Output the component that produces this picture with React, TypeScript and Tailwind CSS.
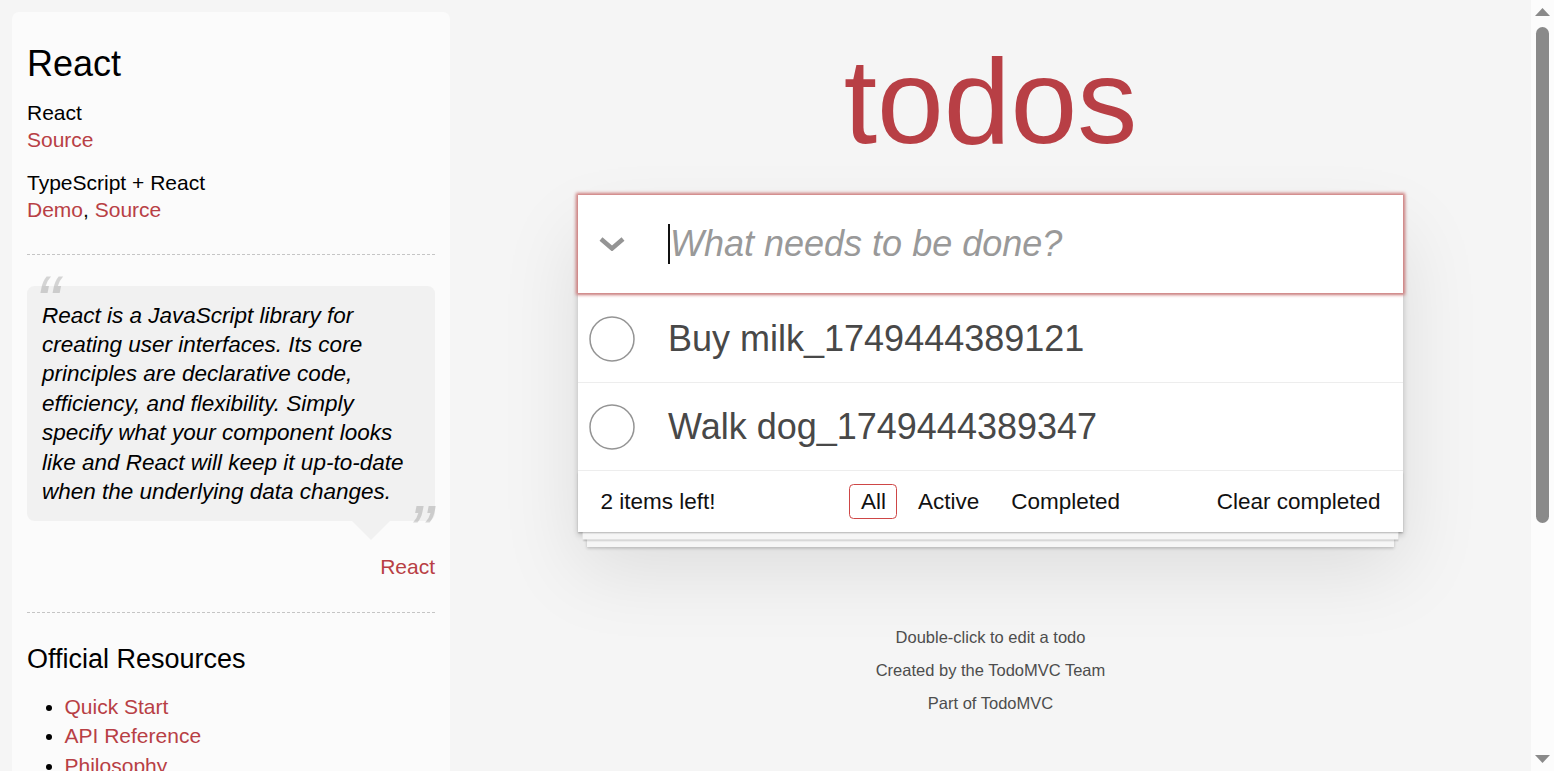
import { Fragment } from 'react';

const todos = ['Buy milk_1749444389121', 'Walk dog_1749444389347'];
const filters = ['All', 'Active', 'Completed'];
const resources = ['Quick Start', 'API Reference', 'Philosophy', 'React Community'];

const link = 'text-[#b83f45]';

export default function App() {
  return (
    <div className="flex h-[771px] overflow-hidden bg-[#f5f5f5] font-['Liberation_Sans',Arial,sans-serif] text-black">
      <Sidebar />

      <main className="flex flex-1 flex-col items-center pt-[41px]">
        <h1 className="text-center text-[120px] leading-[120px] font-normal text-[#b83f45]">todos</h1>

        <section className="mt-[34px] w-[825px] bg-white shadow-[0_3px_6px_0_rgba(0,0,0,0.2),0_37.5px_75px_0_rgba(0,0,0,0.1)]">
          <div className="relative z-10 flex h-[98px] items-center pl-[21px] shadow-[0_0_3px_2px_#cf7d7d]">
            <svg width="26" height="14" viewBox="0 0 26 14" fill="none" className="shrink-0">
              <polyline points="2,2 13,11.5 24,2" stroke="#949494" strokeWidth="4.5" />
            </svg>
            <div className="ml-[43px] flex items-center">
              <span className="h-[40px] w-[2px] bg-[#111]" />
              <span className="text-[36px] leading-[50px] italic text-[#999]">What needs to be done?</span>
            </div>
          </div>

          <ul className="border-t-2 border-[#e6e6e6]">
            {todos.map(t => (
              <li key={t} className="flex h-[88px] items-center border-b border-[#ededed] pl-[11px]">
                <svg width="46" height="46" viewBox="0 0 46 46" fill="none" className="shrink-0">
                  <circle cx="23" cy="23" r="22" stroke="#949494" strokeWidth="1.5" />
                </svg>
                <span className="ml-[33px] text-[36px] leading-[43px] text-[#484848]">{t}</span>
              </li>
            ))}
          </ul>

          <footer className="grid h-[61px] grid-cols-[1fr_auto_1fr] items-center px-[22.5px] text-[22.5px] leading-[30px] text-[#111] shadow-[0_1.5px_1.5px_rgba(0,0,0,0.2),0_12px_0_-4.5px_#f6f6f6,0_13.5px_1.5px_-4.5px_rgba(0,0,0,0.2),0_24px_0_-9px_#f6f6f6,0_25.5px_3px_-9px_rgba(0,0,0,0.2)]">
            <span>2 items left!</span>
            <ul className="flex">
              {filters.map(f => (
                <li key={f}>
                  <a className={`mx-[4.5px] block rounded-[4.5px] border px-[10.5px] py-[4.5px] leading-[24px] ${f === 'All' ? 'border-[#ce4646]' : 'border-transparent'}`}>
                    {f}
                  </a>
                </li>
              ))}
            </ul>
            <span className="text-right">Clear completed</span>
          </footer>
        </section>

        <footer className="mt-[97px] space-y-[16.5px] text-center text-[16.5px] leading-[16.5px] text-[#4d4d4d]">
          <p>Double-click to edit a todo</p>
          <p>Created by the TodoMVC Team</p>
          <p>Part of TodoMVC</p>
        </footer>
      </main>

      <Scrollbar />
    </div>
  );
}

function Sidebar() {
  return (
    <aside className="w-[450px] shrink-0 pl-[12px] pt-[12px]">
      <div className="h-full rounded-t-[7px] bg-[#fbfbfb] px-[15px] pt-[34px] text-[21px] leading-[27px]">
        <h2 className="text-[36px] leading-[36px]">React</h2>

        <div className="mt-[16.5px]">
          <p>React</p>
          <a className={link}>Source</a>
        </div>
        <div className="mt-[16px]">
          <p>TypeScript + React</p>
          <p>
            <a className={link}>Demo</a>, <a className={link}>Source</a>
          </p>
        </div>

        <hr className="mt-[31px] border-0 border-t border-dashed border-[#c5c5c5]" />

        <blockquote className="relative mt-[31px] rounded-[7.5px] bg-[#f1f1f1] p-[15px] text-[22.5px] leading-[29.4px] italic">
          <span className="absolute top-[-21px] left-[8px] text-[75px] leading-[75px] italic text-black opacity-15">“</span>
          <p>
            React is a JavaScript library for creating user interfaces. Its core principles are declarative code,
            efficiency, and flexibility. Simply specify what your component looks like and React will keep it up-to-date
            when the underlying data changes.
          </p>
          <span className="absolute top-[208px] right-[2px] text-[75px] leading-[75px] italic text-black opacity-15">”</span>
          <span className="absolute top-full right-[45px] h-0 w-0 border-[19.5px] border-transparent border-t-[#f1f1f1]" />
        </blockquote>
        <p className="mt-[31px] text-right leading-[29.4px]">
          <a className={link}>React</a>
        </p>

        <hr className="mt-[30px] border-0 border-t border-dashed border-[#c5c5c5]" />

        <h3 className="mt-[31px] text-[27px] leading-[30px]">Official Resources</h3>
        <ul className="mt-[18px] list-disc pl-[37.5px] leading-[29.4px]">
          {resources.map(r => (
            <Fragment key={r}>
              <li>
                <a className={link}>{r}</a>
              </li>
            </Fragment>
          ))}
        </ul>
      </div>
    </aside>
  );
}

function Scrollbar() {
  return (
    <div className="flex w-[23px] shrink-0 flex-col items-center bg-[#fcfcfc]">
      <svg width="15" height="8" viewBox="0 0 15 8" className="mt-[8px] shrink-0">
        <polygon points="0,8 7.5,0 15,8" fill="#8a8a8a" />
      </svg>
      <div className="mt-[11px] h-[496px] w-[13.5px] rounded-full bg-[#8a8a8a]" />
      <div className="flex-1" />
      <svg width="15" height="8" viewBox="0 0 15 8" className="mb-[8px] shrink-0">
        <polygon points="0,0 15,0 7.5,8" fill="#8a8a8a" />
      </svg>
    </div>
  );
}
